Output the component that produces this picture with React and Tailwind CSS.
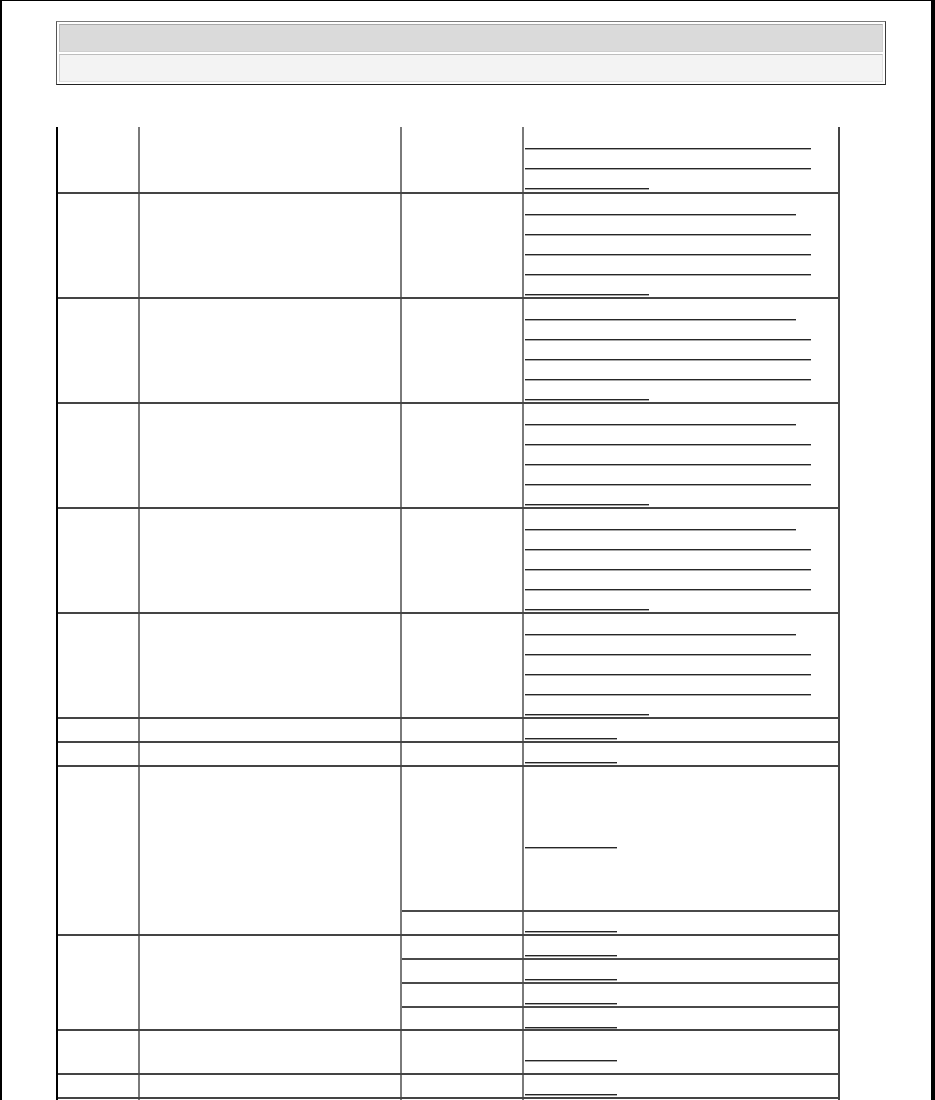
import React from "react";

const W = { first: 271, long: 286, last: 124, single: 92 };

function Line({ kind }) {
  return (
    <div className="h-[20px] flex items-end pb-[1px]">
      <span
        className="block h-[1px] bg-[#262626] shadow-[0_1px_0_#a8a8a8]"
        style={{ width: W[kind] }}
      />
    </div>
  );
}

function Col4({ lines }) {
  return (
    <div className="flex-1 flex flex-col justify-center pl-[1px]">
      {lines.map((k, i) => (
        <Line key={i} kind={k} />
      ))}
    </div>
  );
}

const FIVE = ["first", "long", "long", "long", "last"];

const rows = [
  { h: 67, lines: ["long", "long", "last"] },
  { h: 105, lines: FIVE },
  { h: 105, lines: FIVE },
  { h: 105, lines: FIVE },
  { h: 105, lines: FIVE },
  { h: 105, lines: FIVE },
  { h: 24, lines: ["single"] },
  { h: 24, lines: ["single"] },
  { h: 169, subs: [145, 22] },
  { h: 95, subs: [24, 24, 24, 21] },
  { h: 44, lines: ["single"] },
  { h: 24, lines: ["single"] },
  { h: 40, lines: [] },
];

function Row({ row }) {
  return (
    <div
      className="flex border-b-2 border-[#444444] shrink-0"
      style={{ height: row.h }}
    >
      <div className="w-[82px] shrink-0 border-r-2 border-[#7a7a7a]" />
      <div className="w-[262px] shrink-0 border-r-2 border-[#7a7a7a]" />
      {row.subs ? (
        <div className="flex-1 flex flex-col">
          {row.subs.map((sh, i) => (
            <div
              key={i}
              className={
                i < row.subs.length - 1
                  ? "flex border-b-2 border-[#4a4a4a] shrink-0"
                  : "flex shrink-0"
              }
              style={{ height: sh }}
            >
              <div className="w-[122px] shrink-0 border-r-2 border-[#7a7a7a]" />
              <Col4 lines={["single"]} />
            </div>
          ))}
        </div>
      ) : (
        <>
          <div className="w-[122px] shrink-0 border-r-2 border-[#7a7a7a]" />
          <Col4 lines={row.lines} />
        </>
      )}
    </div>
  );
}

export default function App() {
  return (
    <div
      className="w-[935px] h-[1100px] overflow-hidden bg-white border-t border-l-2 border-r-4 border-black"
      style={{ fontFamily: '"Liberation Sans", Arial, sans-serif' }}
    >
      <div className="ml-[54px] mt-[20px] w-[830px] h-[64px] border border-t-[#7a7a7a] border-l-[#555555] border-r-[#3a3a3a] border-b-[#222222] p-[2px] flex flex-col gap-[2px]">
        <div className="flex-1 bg-[#dadada] border border-[#cfcfcf] border-t-[#a8a8a8] border-l-[#bdbdbd]" />
        <div className="flex-1 bg-[#f3f3f3] border border-[#e0e0e0] border-t-[#bdbdbd] border-l-[#cfcfcf]" />
      </div>
      <div className="ml-[54px] mt-[42px] w-[784px] border-l-2 border-black border-r-2 border-r-[#444444] flex flex-col">
        {rows.map((r, i) => (
          <Row key={i} row={r} />
        ))}
      </div>
    </div>
  );
}
